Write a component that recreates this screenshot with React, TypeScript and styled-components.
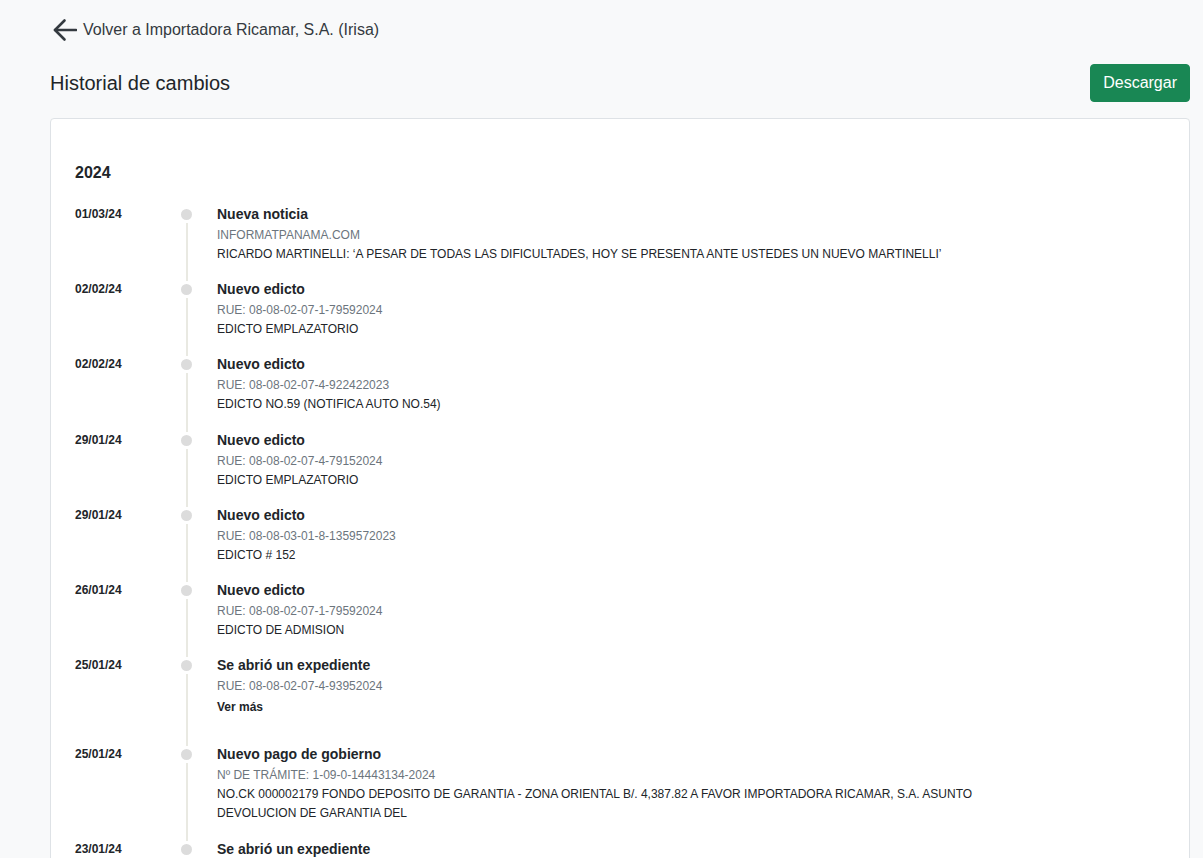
import React from 'react';
import styled, { createGlobalStyle } from 'styled-components';

const GlobalStyle = createGlobalStyle`
  html, body {
    margin: 0;
    padding: 0;
    background: #f8f9fa;
    font-family: 'Liberation Sans', Arial, sans-serif;
    color: #212529;
  }
  * {
    box-sizing: border-box;
  }
`;

const Page = styled.div`
  padding: 18px 13px 0 50px;
`;

const BackLink = styled.a`
  display: inline-flex;
  align-items: center;
  gap: 6px;
  margin-left: 3px;
  height: 24px;
  font-size: 16px;
  line-height: 24px;
  color: #343a40;
  text-decoration: none;
  cursor: pointer;
`;

const Header = styled.div`
  display: flex;
  align-items: center;
  justify-content: space-between;
  margin-top: 18px;
`;

const Title = styled.h1`
  margin: 0;
  font-size: 20px;
  font-weight: 400;
  color: #212529;
`;

const Button = styled.button`
  font-family: inherit;
  font-size: 16px;
  line-height: 24px;
  padding: 6px 12px;
  color: #fff;
  background: #198754;
  border: 1px solid #198754;
  border-radius: 4px;
  cursor: pointer;
`;

const Card = styled.div`
  margin-top: 16px;
  background: #fff;
  border: 1px solid #dee2e6;
  border-radius: 4px;
  padding: 44px 24px 24px;
`;

const Year = styled.h2`
  margin: 0 0 21px;
  font-size: 16px;
  line-height: 19px;
  font-weight: 700;
`;

const Row = styled.div`
  display: grid;
  grid-template-columns: 100px 22px 1fr;
`;

const DateCell = styled.div`
  font-size: 12px;
  font-weight: 700;
  line-height: 23px;
`;

// dot for the entry plus the rail that runs down to the next one
const Rail = styled.div`
  position: relative;

  &::before {
    content: '';
    position: absolute;
    top: 6px;
    left: 5.5px;
    width: 11px;
    height: 11px;
    border-radius: 50%;
    background: #dcdcdc;
  }

  &::after {
    content: '';
    position: absolute;
    top: 20px;
    bottom: -3px;
    left: 10.5px;
    width: 2px;
    background: #e9e9e2;
  }
`;

const Body = styled.div`
  padding: 0 0 14.2px 20px;
`;

const EventTitle = styled.div`
  font-size: 14px;
  font-weight: 700;
  line-height: 23px;
`;

const Line = styled.div<{ $muted?: boolean }>`
  font-size: 12px;
  line-height: 19px;
  color: ${(p) => (p.$muted ? '#6c757d' : '#212529')};
`;

const More = styled.div`
  font-size: 12px;
  font-weight: 700;
  line-height: 19px;
  padding-top: 2px;
  margin-bottom: 12px;
  cursor: pointer;
`;

type Event = {
  date: string;
  title: string;
  ref: string;
  lines?: string[];
  more?: boolean;
};

const events: Event[] = [
  {
    date: '01/03/24',
    title: 'Nueva noticia',
    ref: 'INFORMATPANAMA.COM',
    lines: ['RICARDO MARTINELLI: ‘A PESAR DE TODAS LAS DIFICULTADES, HOY SE PRESENTA ANTE USTEDES UN NUEVO MARTINELLI’'],
  },
  { date: '02/02/24', title: 'Nuevo edicto', ref: 'RUE: 08-08-02-07-1-79592024', lines: ['EDICTO EMPLAZATORIO'] },
  { date: '02/02/24', title: 'Nuevo edicto', ref: 'RUE: 08-08-02-07-4-922422023', lines: ['EDICTO NO.59 (NOTIFICA AUTO NO.54)'] },
  { date: '29/01/24', title: 'Nuevo edicto', ref: 'RUE: 08-08-02-07-4-79152024', lines: ['EDICTO EMPLAZATORIO'] },
  { date: '29/01/24', title: 'Nuevo edicto', ref: 'RUE: 08-08-03-01-8-1359572023', lines: ['EDICTO # 152'] },
  { date: '26/01/24', title: 'Nuevo edicto', ref: 'RUE: 08-08-02-07-1-79592024', lines: ['EDICTO DE ADMISION'] },
  { date: '25/01/24', title: 'Se abrió un expediente', ref: 'RUE: 08-08-02-07-4-93952024', more: true },
  {
    date: '25/01/24',
    title: 'Nuevo pago de gobierno',
    ref: 'Nº DE TRÁMITE: 1-09-0-14443134-2024',
    lines: [
      'NO.CK 000002179 FONDO DEPOSITO DE GARANTIA - ZONA ORIENTAL B/. 4,387.82 A FAVOR IMPORTADORA RICAMAR, S.A. ASUNTO',
      'DEVOLUCION DE GARANTIA DEL',
    ],
  },
  { date: '23/01/24', title: 'Se abrió un expediente', ref: 'RUE: 08-08-02-07-4-93952024', more: true },
];

function ArrowLeft() {
  return (
    <svg width="24" height="24" viewBox="0 0 24 24" fill="none" stroke="#343a40" strokeWidth="2.6" strokeLinecap="round" strokeLinejoin="round">
      <path d="M23 12H2" />
      <path d="M11.5 2.5L2 12l9.5 9.5" />
    </svg>
  );
}

export default function App() {
  return (
    <>
      <GlobalStyle />
      <Page>
        <BackLink>
          <ArrowLeft />
          Volver a Importadora Ricamar, S.A. (Irisa)
        </BackLink>
        <Header>
          <Title>Historial de cambios</Title>
          <Button>Descargar</Button>
        </Header>
        <Card>
          <Year>2024</Year>
          {events.map((ev, i) => (
            <Row key={i}>
              <DateCell>{ev.date}</DateCell>
              <Rail />
              <Body>
                <EventTitle>{ev.title}</EventTitle>
                <Line $muted>{ev.ref}</Line>
                {ev.lines?.map((l, j) => (
                  <Line key={j}>{l}</Line>
                ))}
                {ev.more && <More>Ver más</More>}
              </Body>
            </Row>
          ))}
        </Card>
      </Page>
    </>
  );
}
